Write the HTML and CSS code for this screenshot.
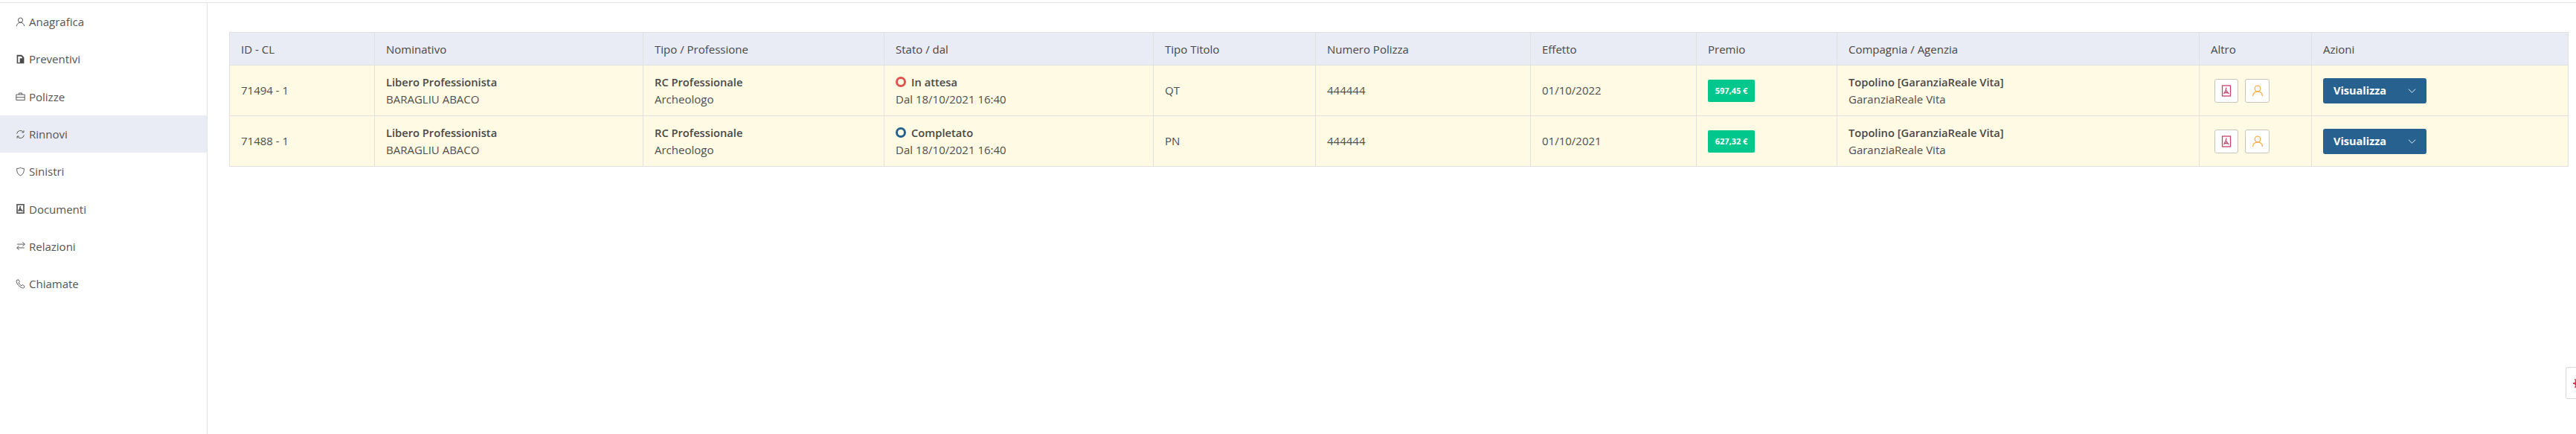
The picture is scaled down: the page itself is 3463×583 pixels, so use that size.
FILE: index.html
```html
<!DOCTYPE html>
<html lang="it">
<head>
    <meta charset="UTF-8">
    <meta name="viewport" content="width=device-width, initial-scale=1.0">
    <title>Rinnovi</title>
    <link rel="stylesheet" href="styles.css">
</head>
<body>
    <!-- Icone riutilizzate -->
    <svg class="icon-defs" width="0" height="0">
        <symbol id="i-user" viewBox="0 0 16 16"><circle cx="8" cy="5" r="3.8"/><path d="M1.500 15c.4-3.600 3-6 6.500-6s6.100 2.400 6.500 6"/></symbol>
        <symbol id="i-pdf" viewBox="0 0 16 16"><rect x="2.500" y="1" width="11" height="14"/><path d="M8 3.500c-.3 3-1.500 6-3.500 8.500M8 7.500c.6 2 1.800 3.500 3.500 4.500M5.500 10.500h5"/></symbol>
    </svg>

    <div class="top-line"></div>
    <div class="layout">
        <!-- Menu laterale -->
        <nav class="sidebar">
            <a class="side-item"><svg class="side-icon"><use href="#i-user"/></svg>Anagrafica</a>
            <a class="side-item"><svg class="side-icon" viewBox="0 0 16 16"><path class="solid" d="M2 1h8l4 4v10H2zM4 3.500v10h3V6.500h4V5L9 3.500z"/></svg>Preventivi</a>
            <a class="side-item"><svg class="side-icon" viewBox="0 0 16 16"><path d="M1 5h14v9H1zM1 9.500h14M5.500 5V2.500h5V5"/></svg>Polizze</a>
            <a class="side-item active"><svg class="side-icon" viewBox="0 0 16 16"><path d="M2 7a6 6 0 0 1 11-2.500M14 9a6 6 0 0 1-11 2.500M13.500 1.500v3.300h-3.300M2.500 14.500v-3.300h3.300"/></svg>Rinnovi</a>
            <a class="side-item"><svg class="side-icon" viewBox="0 0 16 16"><path d="M8 1.500c2 1.200 3.800 1.500 6 1.500 0 5-1 9.500-6 11.500C3 12.500 2 8 2 3c2.200 0 4-.3 6-1.500z"/></svg>Sinistri</a>
            <a class="side-item"><svg class="side-icon thick"><use href="#i-pdf"/></svg>Documenti</a>
            <a class="side-item"><svg class="side-icon wide" viewBox="0 0 16 16"><path d="M2 5h12.500M11 1.500 14.500 5 11 8.500M14 11H1.500M5 7.500 1.500 11 5 14.500"/></svg>Relazioni</a>
            <a class="side-item"><svg class="side-icon" viewBox="0 0 16 16"><path d="M2 1.500 4.800 1l2 3.200L5.200 6c.8 2 2.400 3.800 4.600 4.800l1.800-1.600 3 2.300-.6 2.500c-.4.800-2 1-3.500.3C6 12.500 2.500 8.500 1.500 4.500c-.2-1.200 0-2.500.5-3z"/></svg>Chiamate</a>
        </nav>

        <main class="content">
            <!-- Tabella dei rinnovi -->
            <table class="grid">
                <colgroup>
                    <col class="c-id"><col class="c-name"><col class="c-type"><col class="c-state">
                    <col class="c-title"><col class="c-num"><col class="c-date"><col class="c-prize">
                    <col class="c-company"><col class="c-other"><col class="c-actions">
                </colgroup>
                <thead>
                    <tr>
                        <th>ID - CL</th>
                        <th>Nominativo</th>
                        <th>Tipo / Professione</th>
                        <th>Stato / dal</th>
                        <th>Tipo Titolo</th>
                        <th>Numero Polizza</th>
                        <th>Effetto</th>
                        <th>Premio</th>
                        <th>Compagnia / Agenzia</th>
                        <th>Altro</th>
                        <th>Azioni</th>
                    </tr>
                </thead>
                <tbody>
                    <tr>
                        <td>71494 - 1</td>
                        <td><div class="strong">Libero Professionista</div><div>BARAGLIU ABACO</div></td>
                        <td><div class="strong">RC Professionale</div><div>Archeologo</div></td>
                        <td><div class="strong state"><span class="ring ring-red"></span>In attesa</div><div>Dal 18/10/2021 16:40</div></td>
                        <td>QT</td>
                        <td>444444</td>
                        <td>01/10/2022</td>
                        <td><span class="badge">597,45 €</span></td>
                        <td><div class="strong">Topolino [GaranziaReale Vita]</div><div>GaranziaReale Vita</div></td>
                        <td>
                            <div class="tools">
                                <button class="tool tool-pdf"><svg><use href="#i-pdf"/></svg></button>
                                <button class="tool tool-user"><svg><use href="#i-user"/></svg></button>
                            </div>
                        </td>
                        <td><button class="view-button">Visualizza<svg viewBox="0 0 12 8"><path d="M1 1.500 6 6.500l5-5"/></svg></button></td>
                    </tr>
                    <tr>
                        <td>71488 - 1</td>
                        <td><div class="strong">Libero Professionista</div><div>BARAGLIU ABACO</div></td>
                        <td><div class="strong">RC Professionale</div><div>Archeologo</div></td>
                        <td><div class="strong state"><span class="ring ring-blue"></span>Completato</div><div>Dal 18/10/2021 16:40</div></td>
                        <td>PN</td>
                        <td>444444</td>
                        <td>01/10/2021</td>
                        <td><span class="badge">627,32 €</span></td>
                        <td><div class="strong">Topolino [GaranziaReale Vita]</div><div>GaranziaReale Vita</div></td>
                        <td>
                            <div class="tools">
                                <button class="tool tool-pdf"><svg><use href="#i-pdf"/></svg></button>
                                <button class="tool tool-user"><svg><use href="#i-user"/></svg></button>
                            </div>
                        </td>
                        <td><button class="view-button">Visualizza<svg viewBox="0 0 12 8"><path d="M1 1.500 6 6.500l5-5"/></svg></button></td>
                    </tr>
                </tbody>
            </table>
        </main>
    </div>

    <!-- Pulsante impostazioni fisso sul bordo -->
    <button class="settings-tab">
        <svg viewBox="0 0 16 16"><circle cx="8" cy="8" r="4.500"/><path d="M8 1v2M8 13v2M1 8h2M13 8h2M3 3l1.500 1.500M11.500 11.500 13 13M3 13l1.500-1.500M11.500 4.500 13 3"/></svg>
    </button>
</body>
</html>
```

FILE: styles.css
```css
html, body {
    height: 100%;
}
body {
    margin: 0;
    font-family: "Open Sans", sans-serif;
    font-size: 15px;
    color: #4f4f4f;
    background-color: #fff;
    overflow: hidden;
}
svg {
    fill: none;
    stroke: currentColor;
}
.icon-defs {
    position: absolute;
}
.top-line {
    height: 3px;
    border-bottom: 1px solid #e2e2e2;
}
.layout {
    display: flex;
    height: calc(100% - 4px);
}

/* Menu laterale */
.sidebar {
    width: 278px;
    flex-shrink: 0;
    border-right: 1px solid #e2e2e2;
}
.side-item {
    display: flex;
    align-items: center;
    height: 50.3px;
    padding-left: 21px;
    color: #555;
    font-size: 15px;
}
.side-item.active {
    background-color: #e9ecf4;
}
.side-icon {
    width: 13px;
    height: 13px;
    margin-right: 5px;
    flex-shrink: 0;
    stroke-width: 1.2;
}
.side-icon.thick {
    stroke-width: 2;
}
.side-icon.wide {
    width: 14px;
    margin-right: 4px;
}
.side-icon .solid {
    fill: #4a4a4a;
    stroke: none;
}

/* Tabella */
.content {
    flex: 1;
    padding: 39px 11px 0 29px;
}
.grid {
    width: 3144px;
    table-layout: fixed;
    border-collapse: collapse;
    border: 1px solid #dfdfdf;
}
.c-id { width: 195px; }
.c-name { width: 361px; }
.c-type { width: 324px; }
.c-state { width: 362px; }
.c-title { width: 218px; }
.c-num { width: 289px; }
.c-date { width: 223px; }
.c-prize { width: 189px; }
.c-company { width: 487px; }
.c-other { width: 151px; }
.c-actions { width: 345px; }
.grid th,
.grid td {
    padding: 0 15px;
    border: 1px solid #e1e1e1;
    text-align: left;
    white-space: nowrap;
}
.grid th {
    height: 43px;
    background-color: #e9ecf4;
    color: #484848;
    font-weight: 500;
}
.grid td {
    height: 67px;
    background-color: #fefae3;
    line-height: 23px;
}
.strong {
    font-size: 14.7px;
    font-weight: 600;
    color: #484848;
}
.state {
    display: flex;
    align-items: center;
}
.ring {
    width: 14px;
    height: 14px;
    margin-right: 7px;
    box-sizing: border-box;
    border-radius: 50%;
    border: 3px solid;
}
.ring-red {
    border-color: #e0524f;
}
.ring-blue {
    border-color: #26618f;
}
.badge {
    display: inline-block;
    width: 63px;
    height: 30px;
    line-height: 30px;
    vertical-align: middle;
    border-radius: 2px;
    background-color: #00c78c;
    color: #fff;
    font-size: 11px;
    font-weight: 700;
    text-align: center;
}
.tools {
    display: flex;
    gap: 9px;
    padding-left: 5px;
}
.tool {
    display: flex;
    align-items: center;
    justify-content: center;
    width: 32px;
    height: 32px;
    padding: 0;
    background-color: #fff;
    border: 1px solid #c9c5bd;
    border-radius: 3px;
}
.tool svg {
    width: 16px;
    height: 16px;
    stroke-width: 1.3;
}
.tool-pdf {
    color: #c8416a;
}
.tool-user {
    width: 33px;
    color: #f6b04e;
}
.view-button {
    display: flex;
    align-items: center;
    justify-content: space-between;
    width: 139px;
    height: 34px;
    padding: 0 14px;
    background-color: #26618f;
    color: #fff;
    border: none;
    border-radius: 3px;
    font-family: "Open Sans", sans-serif;
    font-size: 14.5px;
    font-weight: 700;
    vertical-align: middle;
}
.view-button svg {
    width: 11px;
    height: 8px;
    stroke-width: 1;
}

/* Pulsante fisso */
.settings-tab {
    position: fixed;
    right: -30px;
    top: 493px;
    display: flex;
    align-items: center;
    width: 44px;
    height: 43px;
    padding: 0 0 0 8px;
    background-color: #fff;
    border: 1px solid #d9d9d9;
    border-radius: 2px;
    color: #d9304f;
}
.settings-tab svg {
    width: 18px;
    height: 18px;
    stroke-width: 1.6;
}
```
